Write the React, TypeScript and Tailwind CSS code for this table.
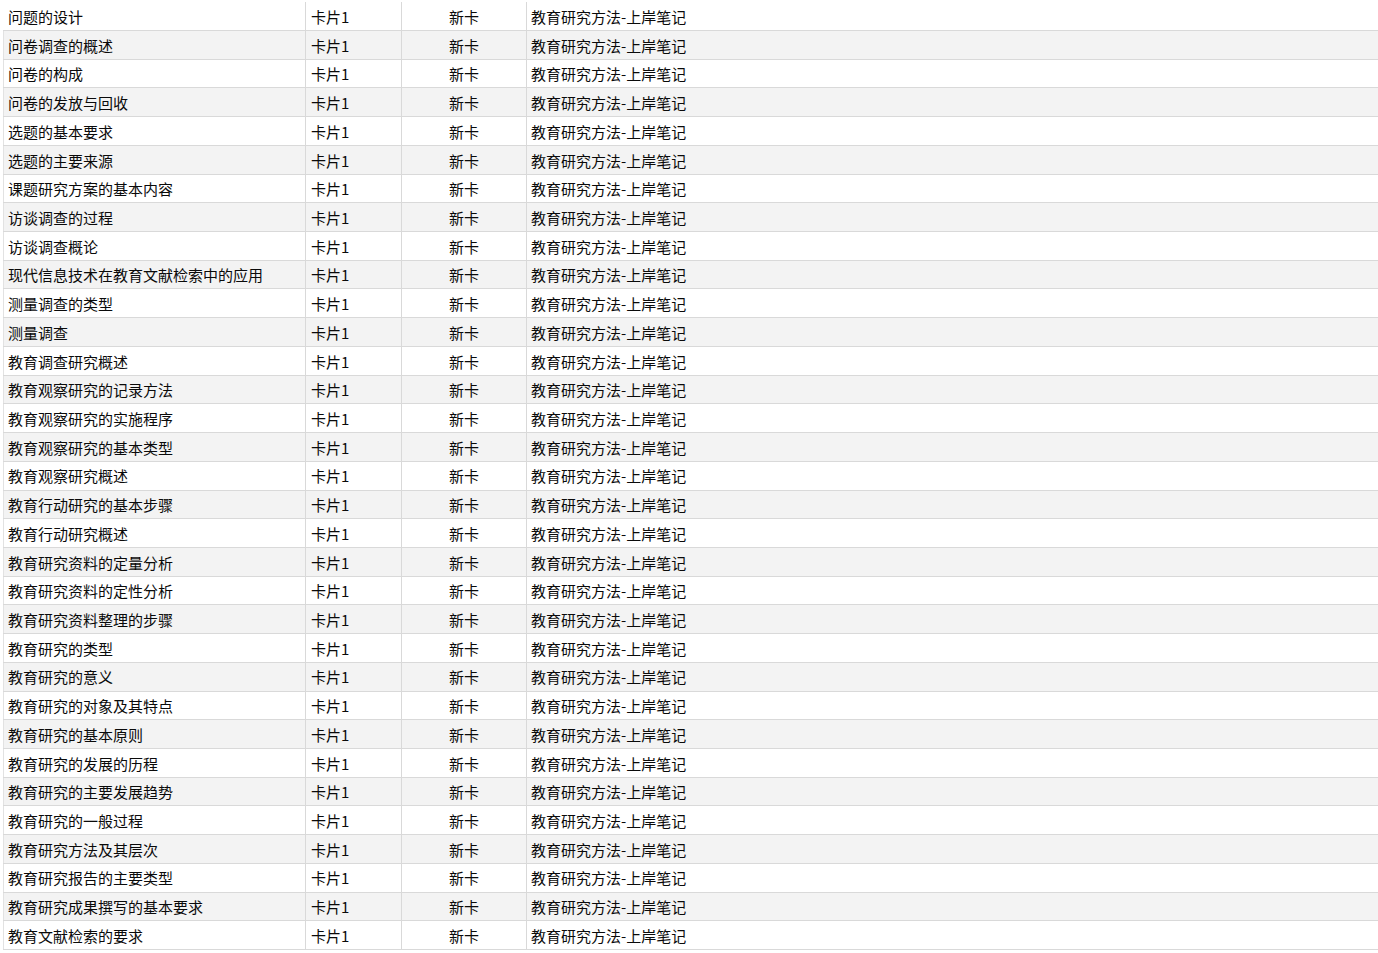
const topics = [
  "问题的设计",
  "问卷调查的概述",
  "问卷的构成",
  "问卷的发放与回收",
  "选题的基本要求",
  "选题的主要来源",
  "课题研究方案的基本内容",
  "访谈调查的过程",
  "访谈调查概论",
  "现代信息技术在教育文献检索中的应用",
  "测量调查的类型",
  "测量调查",
  "教育调查研究概述",
  "教育观察研究的记录方法",
  "教育观察研究的实施程序",
  "教育观察研究的基本类型",
  "教育观察研究概述",
  "教育行动研究的基本步骤",
  "教育行动研究概述",
  "教育研究资料的定量分析",
  "教育研究资料的定性分析",
  "教育研究资料整理的步骤",
  "教育研究的类型",
  "教育研究的意义",
  "教育研究的对象及其特点",
  "教育研究的基本原则",
  "教育研究的发展的历程",
  "教育研究的主要发展趋势",
  "教育研究的一般过程",
  "教育研究方法及其层次",
  "教育研究报告的主要类型",
  "教育研究成果撰写的基本要求",
  "教育文献检索的要求",
];

export default function App() {
  return (
    <div
      className="h-[953px] w-[1378px] overflow-hidden bg-white pl-[3px] pt-[2.3px] text-[15px] text-[#0a0a0a]"
      style={{ fontFamily: '"Noto Sans CJK SC", "Noto Sans", sans-serif' }}
    >
      {topics.map((t, i) => (
        <div
          key={t}
          className={`flex h-[28.72px] items-stretch border-b border-[#d9d9d9] ${
            i % 2 === 1 ? "bg-[#f3f3f3]" : "bg-white"
          } ${i === 0 ? "" : "shadow-[inset_1px_0_0_#e2e2e2]"}`}
        >
          <div className="flex w-[303px] shrink-0 items-center whitespace-nowrap border-r border-[#d9d9d9] pl-[5px] pt-[2px]">
            {t}
          </div>
          <div className="flex w-[96px] shrink-0 items-center border-r border-[#d9d9d9] pl-[5px] pt-[2px]">
            卡片1
          </div>
          <div className="flex w-[125px] shrink-0 items-center justify-center border-r border-[#d9d9d9] pt-[2px]">
            新卡
          </div>
          <div className="flex flex-1 items-center pl-[4px] pt-[2px]">教育研究方法-上岸笔记</div>
        </div>
      ))}
    </div>
  );
}
